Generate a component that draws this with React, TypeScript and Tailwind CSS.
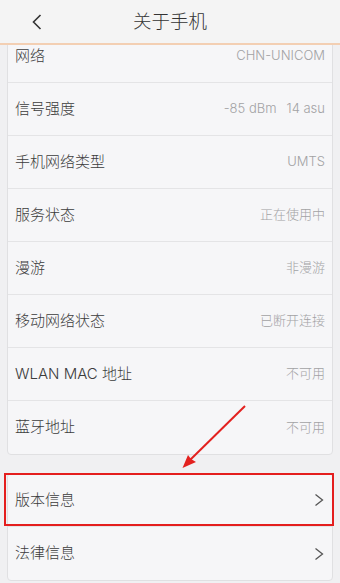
import React from "react";

const FONT = { fontFamily: 'Inter, "Noto Sans CJK SC", sans-serif' };

type Row = { label: string; value?: React.ReactNode; chevron?: boolean };

const rows1: Row[] = [
  { label: "网络", value: "CHN-UNICOM" },
  {
    label: "信号强度",
    value: (
      <span className="flex gap-[10px]">
        <span>-85 dBm</span>
        <span>14 asu</span>
      </span>
    ),
  },
  { label: "手机网络类型", value: "UMTS" },
  { label: "服务状态", value: "正在使用中" },
  { label: "漫游", value: "非漫游" },
  { label: "移动网络状态", value: "已断开连接" },
  { label: "WLAN MAC 地址", value: "不可用" },
  { label: "蓝牙地址", value: "不可用" },
];

function Chevron() {
  return (
    <svg width="10" height="14" viewBox="0 0 10 14" className="mr-[1px]">
      <polyline points="1.5,1.5 8.5,7 1.5,12.5" fill="none" stroke="#555" strokeWidth="1.3" />
    </svg>
  );
}

function ListRow({ row, last, highlight }: { row: Row; last: boolean; highlight?: boolean }) {
  return (
    <div
      className={
        "relative h-[53px] flex items-center justify-between pl-[7px] pr-[7px] " +
        (last ? "" : "border-b border-[#e4e4e6]")
      }
    >
      <span className="text-[15px] text-[#3c3c3c] font-light">{row.label}</span>
      {row.chevron ? (
        <Chevron />
      ) : (
        <span className="text-[13px] text-[#a2a2a4] font-light">{row.value}</span>
      )}
      {highlight && (
        <div className="absolute -left-[4px] -right-[1.5px] -top-[1px] bottom-[0px] border-[2.5px] border-[#e41e1e] pointer-events-none" />
      )}
    </div>
  );
}

export default function App() {
  return (
    <div className="relative w-[340px] h-[583px] overflow-hidden bg-[#f0f0f2] flex flex-col" style={FONT}>
      <header className="h-[45px] shrink-0 bg-[#f4f4f4] border-b-2 border-[#f3cfb3] grid grid-cols-[1fr_auto_1fr] items-center z-10">
        <div className="pl-[32px] flex items-center">
          <svg width="10" height="16" viewBox="0 0 10 16">
            <polyline points="8.5,1 1.5,8 8.5,15" fill="none" stroke="#333" strokeWidth="1.6" />
          </svg>
        </div>
        <h1 className="text-[18.5px] text-[#333] font-light">关于手机</h1>
        <div />
      </header>
      <main className="flex-1 overflow-hidden">
        <div className="mt-[-16px] mx-[7px] bg-[#f6f6f8] border border-[#e0e0e2] rounded-[4px]">
          {rows1.map((r, i) => (
            <ListRow key={r.label} row={r} last={i === rows1.length - 1} />
          ))}
        </div>
        <div className="mt-[18px] mx-[7px] bg-[#f6f6f8] border border-[#e0e0e2] rounded-[4px]">
          <ListRow row={{ label: "版本信息", chevron: true }} last={false} highlight />
          <ListRow row={{ label: "法律信息", chevron: true }} last />
        </div>
      </main>
      <svg className="absolute inset-0 pointer-events-none" width="340" height="583" viewBox="0 0 340 583">
        <line x1="245" y1="406" x2="189" y2="461" stroke="#e3211f" strokeWidth="2" />
        <polygon points="182.5,468 188,455 191,459 196,462" fill="#e3211f" />
      </svg>
    </div>
  );
}
